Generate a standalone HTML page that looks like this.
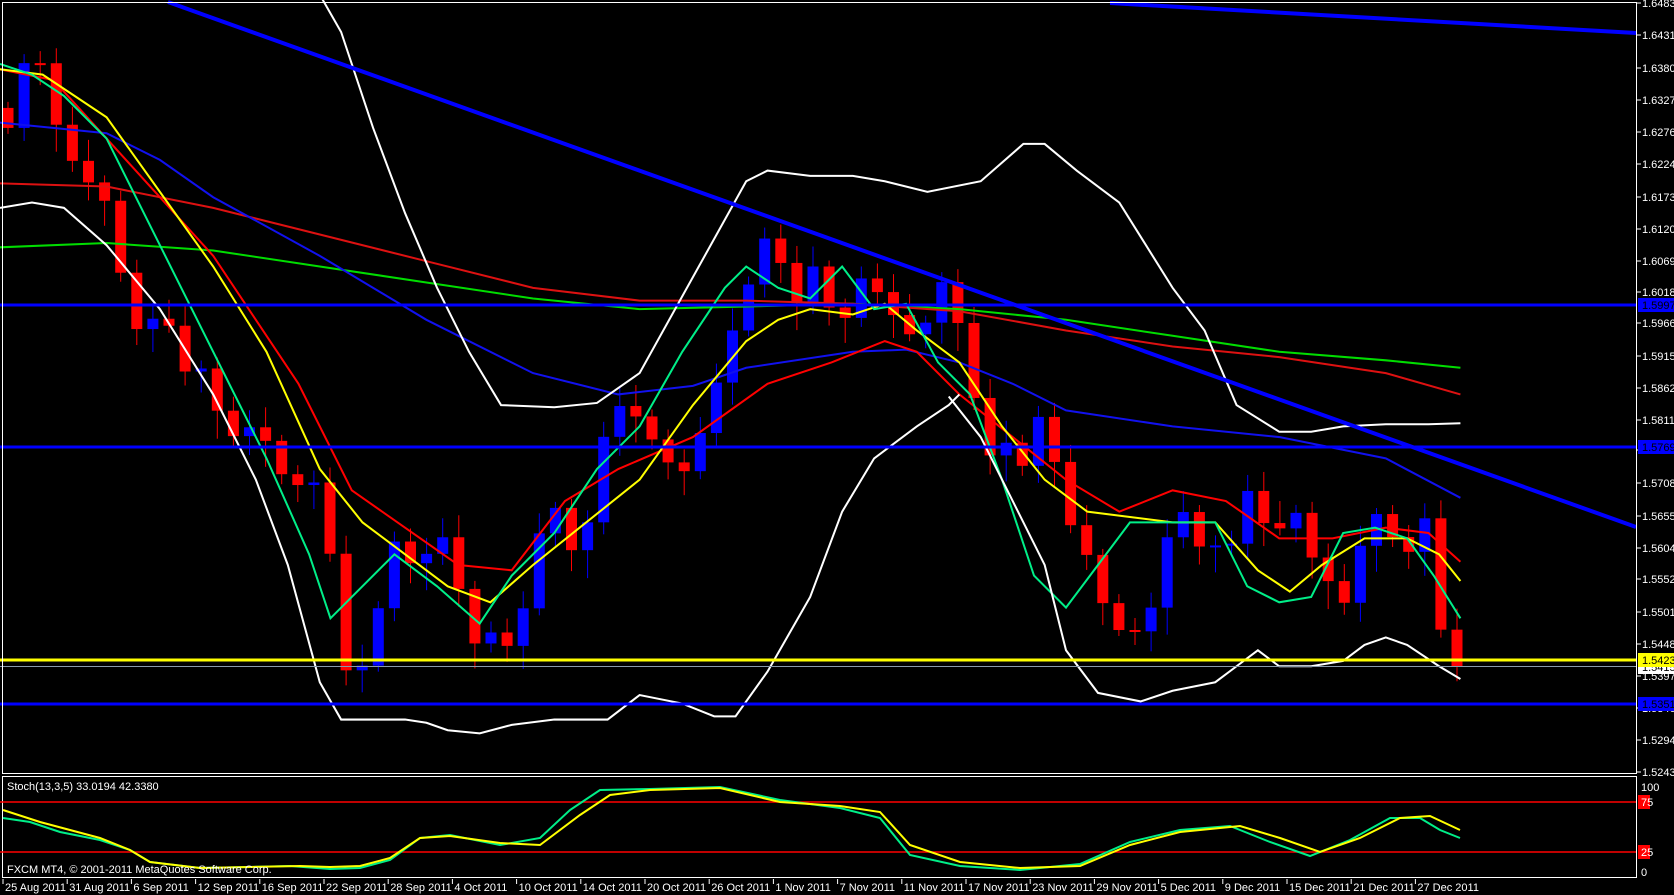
<!DOCTYPE html>
<html><head><meta charset="utf-8"><style>
html,body{margin:0;padding:0;background:#000;width:1674px;height:895px;overflow:hidden}
svg{display:block}
text{font-family:"Liberation Sans",sans-serif;font-size:11px;fill:#fff}
</style></head><body>
<svg id="s" width="1674" height="895" xmlns="http://www.w3.org/2000/svg">
<rect width="1674" height="895" fill="#000"/>
<g id="cand"></g>
<g id="eye" transform="scale(1.066)" fill="none" stroke-width="1.9"></g>
<line x1="168" y1="2" x2="1636" y2="527" stroke="#0000ff" stroke-width="4"/>
<line x1="1110" y1="3" x2="1636" y2="33" stroke="#0000ff" stroke-width="4"/>
<line x1="0" y1="305" x2="1636" y2="305" stroke="#0000ff" stroke-width="3"/>
<line x1="0" y1="447" x2="1636" y2="447" stroke="#0000ff" stroke-width="3"/>
<line x1="0" y1="660" x2="1636" y2="660" stroke="#ffff00" stroke-width="3"/>
<line x1="0" y1="666.5" x2="1636" y2="666.5" stroke="#8899aa" stroke-width="1"/>
<line x1="0" y1="704" x2="1636" y2="704" stroke="#0000ff" stroke-width="3"/>
<rect x="2.5" y="2.5" width="1634" height="771" fill="none" stroke="#fff" stroke-width="1"/>
<rect x="2.5" y="776.5" width="1634" height="101" fill="none" stroke="#fff" stroke-width="1"/>
<line x1="0" y1="802" x2="1636" y2="802" stroke="#ff0000" stroke-width="1.5"/>
<line x1="0" y1="852" x2="1636" y2="852" stroke="#ff0000" stroke-width="1.5"/>
<g id="stoch" fill="none" stroke-width="2"></g>
<g id="ax"></g>
<text x="7" y="790">Stoch(13,3,5) 33.0194 42.3380</text>
<text x="7" y="873">FXCM MT4, © 2001-2011 MetaQuotes Software Corp.</text>
</svg>
<script>
(function(){
var NS="http://www.w3.org/2000/svg";
function el(p,t,a){var e=document.createElementNS(NS,t);for(var k in a)e.setAttribute(k,a[k]);p.appendChild(e);return e;}
function pl(p,pts,c,w){el(p,"polyline",{points:pts.map(function(q){return q.join(",")}).join(" "),stroke:c,"stroke-width":w||1.9,fill:"none"});}
var eye=document.getElementById("eye");
pl(eye,[[0,232],[100,228],[200,235],[300,250],[400,265],[500,280],[600,290],[800,285],[900,290],[1000,300],[1100,315],[1200,330],[1300,338],[1370,345]],"#00dd00");
pl(eye,[[0,172],[100,175],[200,195],[300,220],[400,245],[500,270],[600,282],[700,282],[800,285],[900,292],[1000,310],[1100,325],[1200,335],[1300,350],[1370,370]],"#dd1111");
pl(eye,[[0,115],[100,125],[150,150],[200,185],[300,240],[400,300],[500,350],[580,370],[650,362],[700,345],[800,330],[850,328],[900,340],[950,360],[1000,385],[1100,400],[1200,410],[1300,430],[1370,467]],"#1111ee");
pl(eye,[[0,65],[50,75],[100,130],[200,240],[280,360],[330,460],[380,495],[430,530],[480,535],[530,470],[580,440],[650,410],[720,360],[780,340],[830,320],[860,330],[900,370],[950,410],[1000,450],[1050,480],[1100,460],[1150,470],[1200,505],[1250,505],[1300,495],[1340,500],[1370,527]],"#ff0000");
pl(eye,[[0,65],[40,70],[100,110],[150,180],[200,250],[250,330],[300,440],[340,490],[380,520],[420,550],[460,565],[500,530],[550,490],[600,450],[650,380],[700,320],[730,300],[760,290],[800,295],[830,285],[860,310],[900,340],[940,400],[980,450],[1020,480],[1060,485],[1100,490],[1140,490],[1180,535],[1210,555],[1240,530],[1280,505],[1320,505],[1350,520],[1370,545]],"#ffff00");
pl(eye,[[0,60],[30,70],[60,90],[100,130],[150,230],[200,330],[250,430],[290,520],[310,580],[330,560],[370,520],[410,550],[450,585],[480,540],[520,500],[560,440],[600,400],[640,330],[680,270],[700,250],[730,270],[760,280],[790,250],[820,290],[850,285],[880,340],[910,370],[940,450],[970,540],[1000,570],[1030,530],[1060,490],[1100,490],[1140,490],[1170,550],[1200,565],[1230,560],[1260,500],[1290,495],[1320,505],[1345,540],[1370,580]],"#00ee88");
pl(eye,[[300,-5],[320,30],[350,120],[380,200],[410,270],[440,330],[470,380],[520,382],[560,378],[600,350],[650,260],[700,170],[720,160],[760,165],[800,165],[830,170],[870,180],[920,170],[960,135],[980,135],[1010,160],[1050,190],[1100,270],[1130,310],[1160,380],[1200,405],[1230,405],[1260,400],[1300,398],[1340,398],[1370,397]],"#ffffff");
pl(eye,[[0,195],[30,190],[60,195],[100,230],[150,290],[200,370],[240,450],[270,530],[300,640],[320,675],[360,675],[380,675],[400,678],[420,685],[450,688],[480,680],[520,675],[570,675],[600,652],[640,660],[670,672],[690,672],[720,630],[760,560],[790,480],[820,430],[860,400],[890,380],[900,370]],"#ffffff");
pl(eye,[[890,372],[920,410],[940,450],[980,530],[1000,610],[1030,650],[1070,658],[1100,648],[1140,640],[1160,625],[1180,610],[1200,625],[1230,625],[1260,620],[1280,605],[1300,598],[1320,605],[1350,625],[1370,637]],"#ffffff");
var cl=[120,60,50,110,140,175,165,215,290,320,290,310,355,345,385,410,400,405,440,455,455,450,575,660,610,560,500,530,520,500,540,610,585,610,600,540,470,480,530,480,400,380,390,410,430,450,420,380,330,290,250,210,260,290,245,290,300,260,270,290,310,320,280,250,340,390,440,410,440,390,430,490,510,560,580,610,570,570,460,490,520,510,510,460,490,500,470,520,530,570,560,470,490,510,520,480,600,625];
var N=91,cg=document.getElementById("cand");
function cy(i){var f=i*(cl.length-1)/(N-1),a=Math.floor(f),b=Math.min(a+1,cl.length-1);return (cl[a]+(cl[b]-cl[a])*(f-a))*1.066;}
var prev=cy(0)-20;
for(var i=0;i<N;i++){var x=8+i*16.1,c=cy(i),o=prev;var col=c>o?"#ff0000":"#0000ff";
var tp=Math.min(o,c),bt=Math.max(o,c);if(bt-tp<2)bt=tp+2;
var hw=6+((i*37)%17),lw=6+((i*53)%23);
el(cg,"line",{x1:x,y1:tp-hw,x2:x,y2:bt+lw,stroke:col,"stroke-width":1});
el(cg,"rect",{x:x-5.5,y:tp,width:11,height:bt-tp,fill:col});prev=c;}
var st=document.getElementById("stoch");
pl(st,[[3,818],[30,822],[60,832],[100,840],[130,850],[150,862],[200,868],[250,867],[290,866],[330,869],[360,868],[390,860],[420,838],[450,835],[500,845],[540,838],[570,810],[600,790],[650,789],[720,787],[780,800],[840,808],[880,818],[910,855],[960,866],[1020,870],[1080,864],[1130,842],[1180,830],[1230,826],[1270,842],[1310,856],[1350,840],[1390,818],[1420,818],[1440,830],[1460,838]],"#00ee88",2);
pl(st,[[3,810],[40,822],[100,838],[130,850],[150,862],[200,868],[250,867],[300,866],[330,867],[360,866],[390,858],[420,838],[450,836],[500,843],[540,845],[580,815],[610,795],[650,790],[720,788],[780,802],[840,806],[880,812],[910,845],[960,862],[1020,868],[1080,866],[1130,845],[1180,832],[1240,826],[1280,838],[1320,852],[1360,838],[1400,818],[1430,816],[1460,830]],"#ffff00",2);
var ax=document.getElementById("ax");
var lab=[["1.64835",3],["1.64310",35],["1.63800",68],["1.63275",100],["1.62765",132],["1.62240",164],["1.61730",197],["1.61205",229],["1.60695",261],["1.60185",292],["1.59660",323],["1.59150",356],["1.58625",388],["1.58115",420],["1.57590",450],["1.57080",483],["1.56555",516],["1.56045",548],["1.55520",579],["1.55010",612],["1.54485",644],["1.53975",676],["1.53465",708],["1.52940",740],["1.52430",772]];
lab.forEach(function(l){el(ax,"line",{x1:1637,y1:l[1],x2:1641,y2:l[1],stroke:"#fff"});var t=el(ax,"text",{x:1642,y:l[1]+4});t.textContent=l[0];});
[["1.59976",305,"#0000ff","#000"],["1.57698",447,"#0000ff","#000"],["1.53519",704,"#0000ff","#000"],["1.54152",667,"#ffffff","#000"],["1.54239",660,"#ffff00","#000"]].forEach(function(b){el(ax,"rect",{x:1638,y:b[1]-7,width:36,height:14,fill:b[2]});var t=el(ax,"text",{x:1642,y:b[1]+4,style:"fill:"+b[3]});t.textContent=b[0];});
[["100",787,null],["75",802,"#ff0000"],["25",852,"#ff0000"],["0",872,null]].forEach(function(b){if(b[2])el(ax,"rect",{x:1638,y:b[1]-7,width:12,height:14,fill:b[2]});var t=el(ax,"text",{x:1641,y:b[1]+4});t.textContent=b[0];});
var d=["25 Aug 2011","31 Aug 2011","6 Sep 2011","12 Sep 2011","16 Sep 2011","22 Sep 2011","28 Sep 2011","4 Oct 2011","10 Oct 2011","14 Oct 2011","20 Oct 2011","26 Oct 2011","1 Nov 2011","7 Nov 2011","11 Nov 2011","17 Nov 2011","23 Nov 2011","29 Nov 2011","5 Dec 2011","9 Dec 2011","15 Dec 2011","21 Dec 2011","27 Dec 2011"];
d.forEach(function(s,i){var x=3+i*64.2;el(ax,"line",{x1:x,y1:879,x2:x,y2:884,stroke:"#fff"});var t=el(ax,"text",{x:x+2,y:891});t.textContent=s;});
})();
</script>
</body></html>
